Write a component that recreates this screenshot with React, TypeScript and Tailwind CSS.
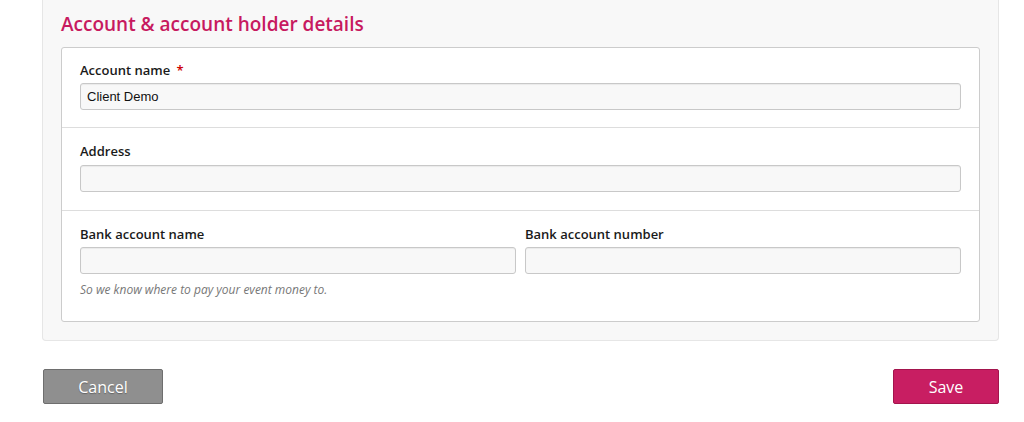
export default function App() {
  const font = { fontFamily: '"Open Sans", "Liberation Sans", sans-serif' }

  return (
    <div className="min-h-[422px] w-[1024px] bg-white" style={font}>
      {/* outer panel */}
      <div className="ml-[42px] w-[957px] rounded-b-[4px] border border-t-0 border-[#e6e6e6] bg-[#f8f8f8] px-[18px] pb-[18px] pt-[12px]">
        <h2 className="mb-[11px] h-[24px] text-[19px] font-semibold leading-[24px] text-[#c71a5f]">
          Account &amp; account holder details
        </h2>

        <div className="rounded-[3px] border border-[#cccccc] bg-white">
          <div className="border-b border-[#dddddd] px-[18px] pb-[17px] pt-[13px]">
            <label className="block h-[18px] text-[13px] font-semibold leading-[18px] text-[#1a1a1a]">
              Account name <span className="ml-[3px] text-[#cc0000]">*</span>
            </label>
            <input
              defaultValue="Client Demo"
              className="mt-[4px] block h-[27px] w-full rounded-[3px] border border-[#c8c8c8] bg-[#f8f8f8] px-[6px] text-[13px] text-[#111] shadow-[inset_0_1px_1px_rgba(0,0,0,0.06)] outline-none"
              style={{ fontFamily: '"Liberation Sans", Arial, sans-serif' }}
            />
          </div>

          <div className="border-b border-[#dddddd] px-[18px] pb-[18px] pt-[14px]">
            <label className="block h-[18px] text-[13px] font-semibold leading-[18px] text-[#1a1a1a]">
              Address
            </label>
            <input className="mt-[5px] block h-[27px] w-full rounded-[3px] border border-[#c8c8c8] bg-[#f8f8f8] px-[6px] text-[13px] shadow-[inset_0_1px_1px_rgba(0,0,0,0.06)] outline-none" />
          </div>

          <div className="px-[18px] pb-[23px] pt-[14px]">
            <div className="grid grid-cols-2 gap-[9px]">
              <div>
                <label className="block h-[18px] text-[13px] font-semibold leading-[18px] text-[#1a1a1a]">
                  Bank account name
                </label>
                <input className="mt-[4px] block h-[27px] w-full rounded-[3px] border border-[#c8c8c8] bg-[#f8f8f8] px-[6px] text-[13px] shadow-[inset_0_1px_1px_rgba(0,0,0,0.06)] outline-none" />
              </div>
              <div>
                <label className="block h-[18px] text-[13px] font-semibold leading-[18px] text-[#1a1a1a]">
                  Bank account number
                </label>
                <input className="mt-[4px] block h-[27px] w-full rounded-[3px] border border-[#c8c8c8] bg-[#f8f8f8] px-[6px] text-[13px] shadow-[inset_0_1px_1px_rgba(0,0,0,0.06)] outline-none" />
              </div>
            </div>
            <p className="mt-[8px] h-[16px] text-[12px] italic leading-[16px] text-[#777]">
              So we know where to pay your event money to.
            </p>
          </div>
        </div>
      </div>

      {/* actions */}
      <div className="ml-[43px] mt-[28px] flex w-[956px] items-center justify-between">
        <button className="h-[35px] w-[120px] rounded-[2px] border border-[#6e6e6e] bg-[#8f8f8f] text-[16px] font-medium text-white [text-shadow:0_1px_1px_rgba(0,0,0,0.3)]">
          Cancel
        </button>
        <button className="h-[35px] w-[106px] rounded-[2px] border border-[#a3144d] bg-[#c81e62] text-[16px] font-medium text-white">
          Save
        </button>
      </div>
    </div>
  )
}
